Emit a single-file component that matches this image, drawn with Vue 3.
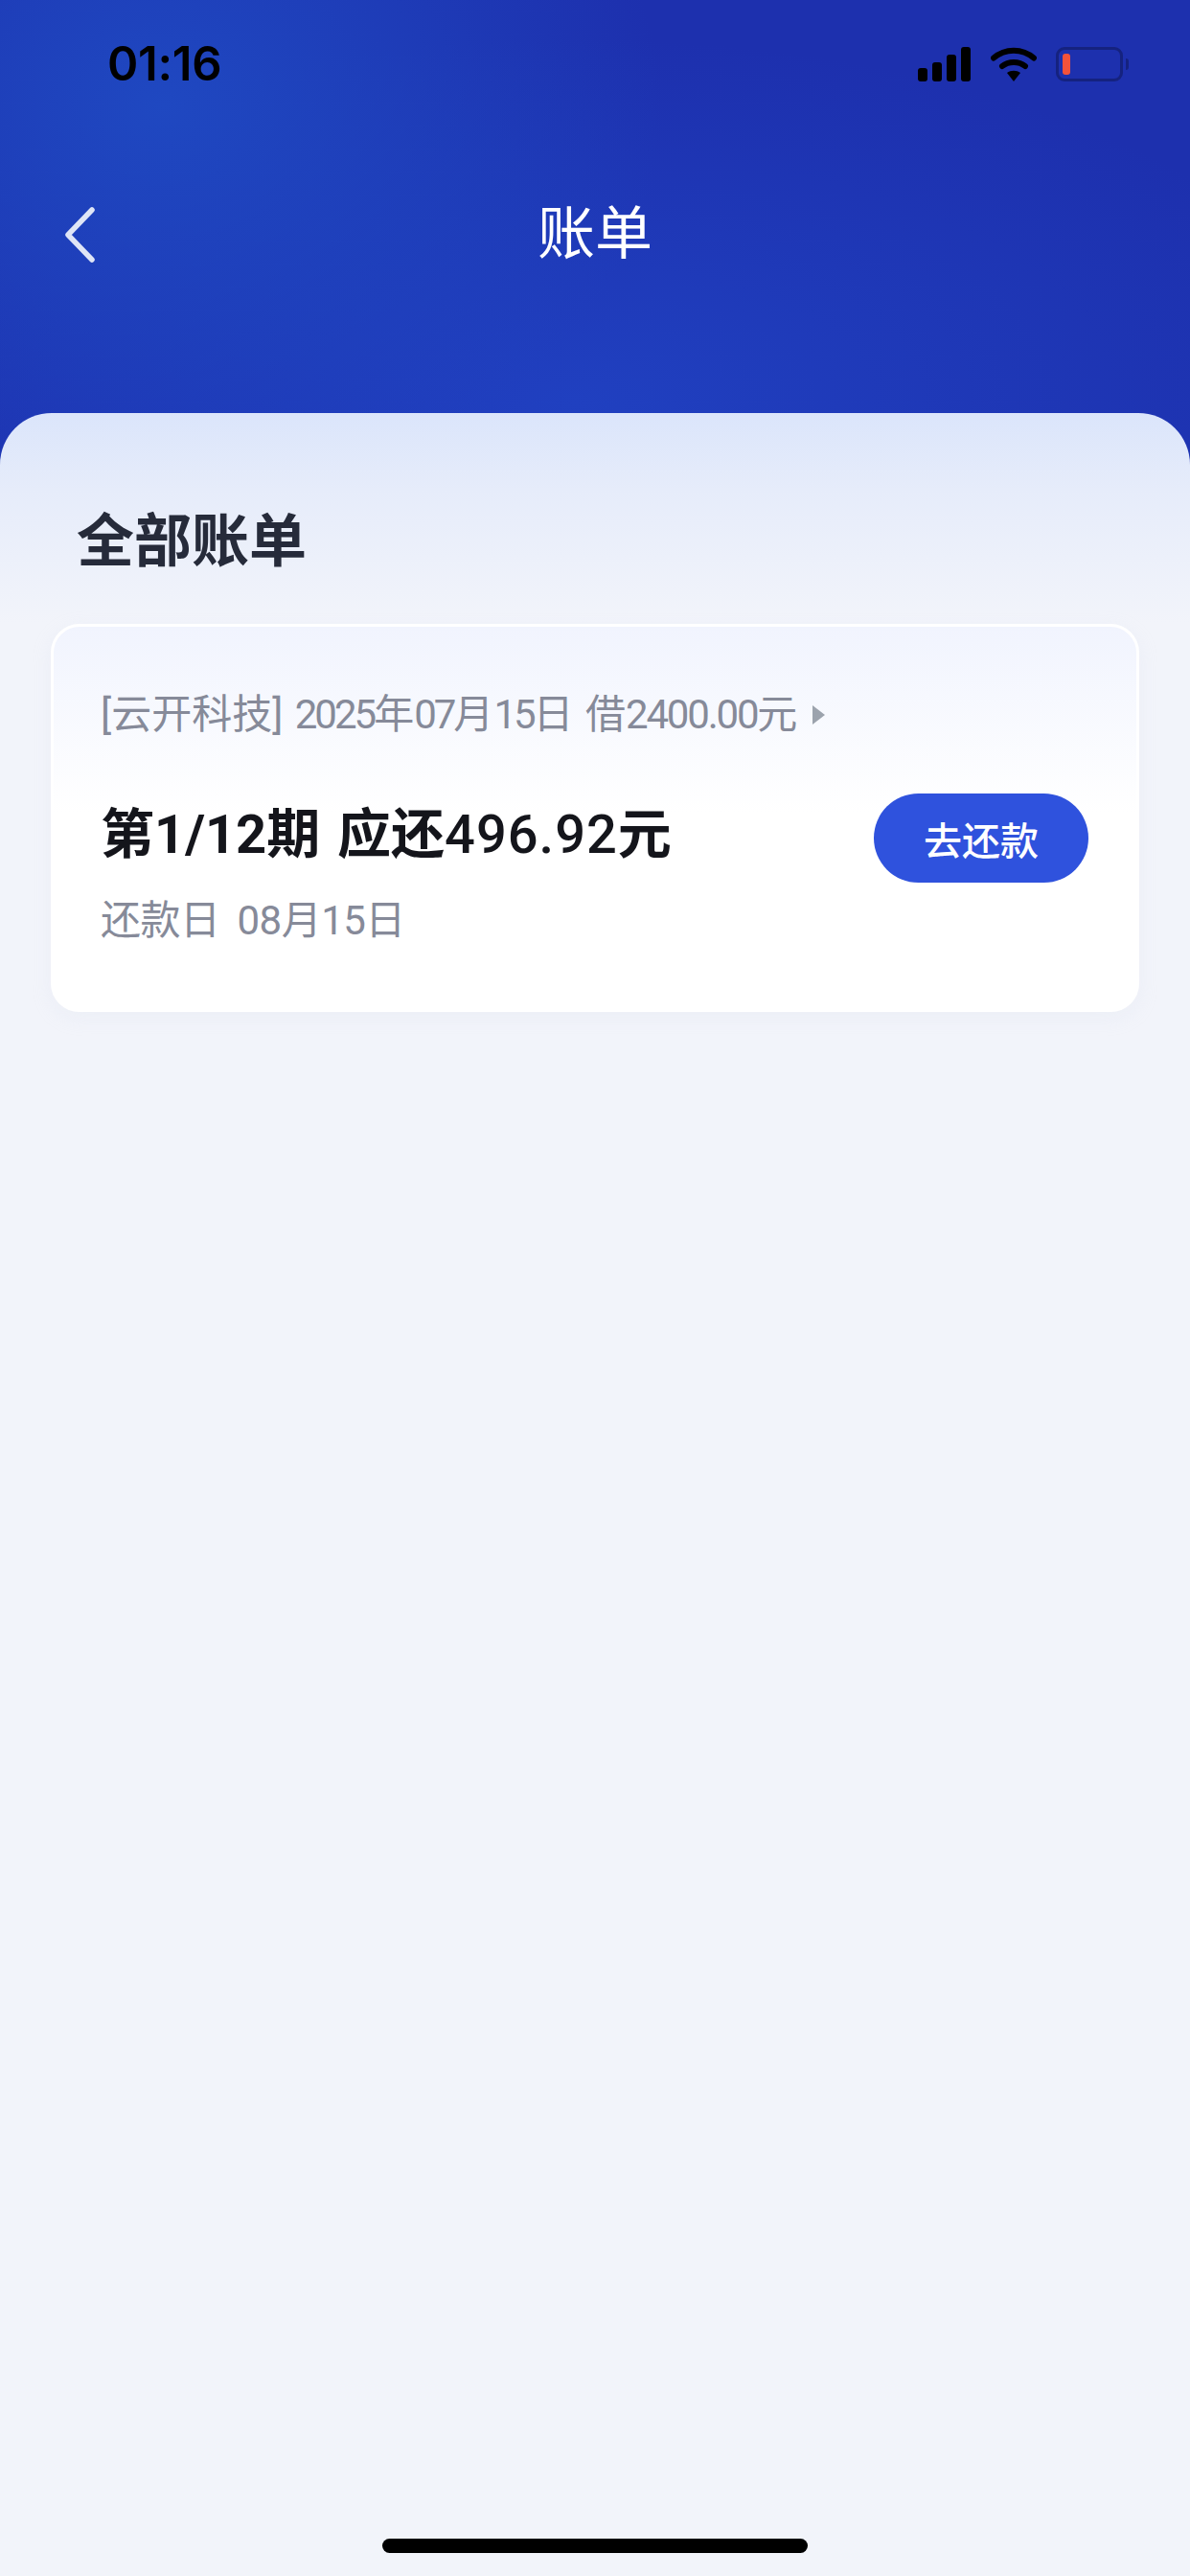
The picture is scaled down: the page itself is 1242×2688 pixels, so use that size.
<template>
  <div class="page">
    <header class="top">
      <div class="status">
        <span class="time">01:16</span>
        <div class="status-icons">
          <svg class="signal" width="56" height="36" viewBox="0 0 56 36">
            <rect x="0" y="22" width="10" height="14" rx="3" />
            <rect x="15" y="16" width="10" height="20" rx="3" />
            <rect x="30" y="8" width="10" height="28" rx="3" />
            <rect x="45" y="0" width="10" height="36" rx="3" />
          </svg>
          <svg class="wifi" width="48" height="36" viewBox="0 0 48 36">
            <path d="M3 11.500C15 1 33 1 45 11.500" fill="none" stroke="#000" stroke-width="6" stroke-linecap="round" />
            <path d="M12 20C18.500 14.500 29.500 14.500 36 20" fill="none" stroke="#000" stroke-width="6" stroke-linecap="round" />
            <path d="M17 27C21 24 27 24 31 27L24 36Z" fill="#000" />
          </svg>
          <div class="battery">
            <div class="battery-body"><span class="battery-level"></span></div>
            <span class="battery-nub"></span>
          </div>
        </div>
      </div>
      <div class="nav">
        <svg class="back" width="32" height="58" viewBox="0 0 32 58">
          <path d="M28 3L3 29L28 55" fill="none" stroke="#dfe5f6" stroke-width="5.500" stroke-linecap="round" stroke-linejoin="round" />
        </svg>
        <h1 class="nav-title">账单</h1>
      </div>
    </header>

    <main class="sheet">
      <h2 class="section-title">全部账单</h2>
      <section class="bill">
        <div class="bill-meta">
          <span>[云开科技] <span class="num">2025</span>年<span class="num">07</span>月<span class="num">15</span>日 借<span class="money">2400.00</span>元</span>
          <i class="meta-arrow"></i>
        </div>
        <div class="bill-row">
          <div class="bill-text">
            <div class="bill-amount">{{ bill.period }} 应还<span class="amount-num">{{ bill.amount }}</span>元</div>
            <div class="bill-date">还款日 {{ bill.date }}</div>
          </div>
          <button class="pay-btn">去还款</button>
        </div>
      </section>
      <div class="home-bar"></div>
    </main>
  </div>
</template>

<script setup>
const bill = {
  period: '第1/12期',
  amount: '496.92',
  date: '08月15日'
};
</script>

<style>
html,
body {
  margin: 0;
  background: #f2f4fa;
}
</style>

<style scoped>
.page {
  width: 1242px;
  height: 2688px;
  display: flex;
  flex-direction: column;
  overflow: hidden;
  font-family: Roboto, "Noto Sans CJK SC", sans-serif;
  background:
    radial-gradient(520px 420px at 170px 110px, #1f48c1 0%, rgba(31, 72, 193, 0) 100%),
    radial-gradient(820px 380px at 600px 420px, #2040c0 0%, rgba(32, 64, 192, 0) 100%),
    #1d30ae;
}

.top {
  height: 431px;
  flex-shrink: 0;
}

.status {
  height: 49px;
  padding: 41px 64px 0 112px;
  display: flex;
  justify-content: space-between;
  align-items: flex-start;
}

.time {
  font-family: Inter, sans-serif;
  font-size: 49px;
  font-weight: 600;
  line-height: 52px;
  letter-spacing: -0.3px;
  color: #000;
}

.status-icons {
  display: flex;
  align-items: flex-start;
  padding-top: 8px;
}

.signal {
  margin-right: 20px;
  fill: #000;
}

.wifi {
  margin-right: 20px;
}

.battery {
  display: flex;
  align-items: center;
}

.battery-body {
  width: 70px;
  height: 36px;
  box-sizing: border-box;
  padding: 4px;
  border: 3px solid #15227f;
  border-radius: 9px;
}

.battery-level {
  display: block;
  width: 8px;
  height: 22px;
  background: #f4523a;
  border-radius: 3px;
}

.battery-nub {
  width: 3px;
  height: 12px;
  margin-left: 3px;
  background: #15227f;
  border-radius: 0 3px 3px 0;
}

.nav {
  margin-top: 120px;
  padding-left: 68px;
  display: grid;
  grid-template-columns: 32px 1fr 100px;
  align-items: center;
}

.back {
  display: block;
}

.nav-title {
  margin: 0;
  font-size: 60px;
  font-weight: 400;
  line-height: 70px;
  text-align: center;
  color: #fff;
}

.sheet {
  flex: 1;
  display: flex;
  flex-direction: column;
  padding: 0 53px 24px 53px;
  border-radius: 54px 54px 0 0;
  background: linear-gradient(180deg, #dbe5fb 0, #e6ecfa 80px, #f2f4fa 220px);
}

.section-title {
  margin: 100px 0 0 27px;
  font-size: 60px;
  font-weight: 700;
  line-height: 70px;
  color: #262b3a;
}

.bill {
  margin-top: 50px;
  height: 405px;
  box-sizing: border-box;
  padding: 69px 50px 0 49px;
  border: 3px solid #fff;
  border-radius: 30px;
  background: linear-gradient(180deg, #f1f4fe 0, #ffffff 195px);
  box-shadow: 0 6px 20px rgba(210, 216, 235, 0.18);
}

.bill-meta {
  display: flex;
  align-items: center;
  font-size: 42px;
  line-height: 46px;
  word-spacing: 2px;
  color: #868a99;
}

.num {
  letter-spacing: -3px;
}

.money {
  letter-spacing: -2.200px;
}

.meta-arrow {
  width: 0;
  height: 0;
  margin-left: 16px;
  border-top: 10px solid transparent;
  border-bottom: 10px solid transparent;
  border-left: 13px solid #9ca3ad;
}

.bill-row {
  margin-top: 59px;
  display: flex;
  justify-content: space-between;
  align-items: flex-start;
}

.bill-text {
  padding-top: 13px;
}

.bill-amount {
  font-size: 56px;
  font-weight: 700;
  line-height: 60px;
  word-spacing: 4px;
  color: #14151b;
}

.amount-num {
  font-weight: 500;
  letter-spacing: 1px;
}

.bill-date {
  margin-top: 35px;
  font-size: 42px;
  line-height: 50px;
  letter-spacing: -0.5px;
  word-spacing: 8px;
  color: #868a99;
}

.pay-btn {
  width: 224px;
  height: 93px;
  border: 0;
  padding: 0;
  border-radius: 47px;
  background: #2f52dd;
  color: #fff;
  font-family: inherit;
  font-size: 40px;
  font-weight: 500;
}

.home-bar {
  width: 444px;
  height: 15px;
  margin: auto 0 0 346px;
  border-radius: 8px;
  background: #000;
}
</style>
